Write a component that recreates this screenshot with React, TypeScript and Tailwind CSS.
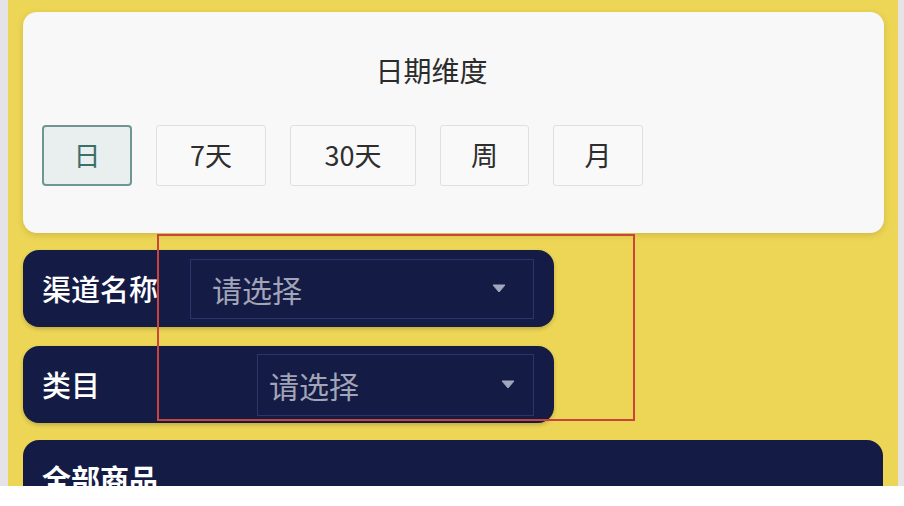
import React from "react";

const font = { fontFamily: '"Noto Sans CJK SC", "Noto Sans", sans-serif' };

function Arrow() {
  return (
    <svg width="14" height="9" viewBox="0 0 14 9" className="shrink-0">
      <path d="M1 1 L13 1 L7 8 Z" fill="#a3a7bb" stroke="#a3a7bb" strokeWidth="1" strokeLinejoin="round" />
    </svg>
  );
}

export default function App() {
  const btns = [
    { t: "日", w: "w-[90px]", active: true },
    { t: "7天", w: "w-[110px]" },
    { t: "30天", w: "w-[126px]" },
    { t: "周", w: "w-[89px]" },
    { t: "月", w: "w-[90px]" },
  ];
  return (
    <div className="w-[904px] h-[506px] flex flex-col bg-white overflow-hidden" style={font}>
      <div className="h-[486px] flex shrink-0">
        <div className="w-[8px] bg-[#e5e3e7] shrink-0" />
        <div className="relative flex-1 bg-[#edd655] overflow-hidden pl-[15px] pr-[14px] pt-[12px]">
          <div className="w-[861px] h-[221px] bg-[#f8f8f8] rounded-[14px] shadow-[0_2px_6px_rgba(120,100,20,0.25)] flex flex-col px-[19px] pt-[38px]">
            <div className="text-center text-[28px] leading-[40px] text-[#2b2b2b] pr-[44px]">日期维度</div>
            <div className="flex mt-[35px] gap-[24px]">
              {btns.map((b) => (
                <div
                  key={b.t}
                  className={
                    b.active
                      ? `${b.w} h-[61px] flex items-center justify-center rounded-[4px] border-2 border-[#6f9693] bg-[#e9efef] text-[#3c6e6a] text-[27px]`
                      : `${b.w} h-[61px] flex items-center justify-center rounded-[3px] border border-[#e0e0e0] bg-[#f9f9f9] text-[#2e2e2e] text-[27px]`
                  }
                >
                  {b.t}
                </div>
              ))}
            </div>
          </div>

          <div className="mt-[17px] w-[531px] h-[77px] rounded-[16px] bg-[#141b45] flex items-center pl-[19px] pr-[20px] shadow-[0_2px_4px_rgba(0,0,0,0.2)]">
            <div className="text-white text-[29px] font-medium w-[148px] shrink-0 leading-none">渠道名称</div>
            <div className="flex-1 h-[60px] border border-[#2c3468] flex items-center pl-[21px] pr-[27px] justify-between">
              <span className="text-[#a2a5b7] text-[30px] leading-none">请选择</span>
              <Arrow />
            </div>
          </div>

          <div className="mt-[19px] w-[531px] h-[77px] rounded-[16px] bg-[#141b45] flex items-center pl-[19px] pr-[20px] shadow-[0_2px_4px_rgba(0,0,0,0.2)]">
            <div className="text-white text-[29px] font-medium w-[215px] shrink-0 leading-none">类目</div>
            <div className="flex-1 h-[62px] border border-[#2c3468] flex items-center pl-[11px] pr-[18px] justify-between">
              <span className="text-[#a2a5b7] text-[30px] leading-none">请选择</span>
              <Arrow />
            </div>
          </div>

          <div className="mt-[17px] w-[860px] h-[120px] rounded-[16px] bg-[#141b45] pl-[19px] pt-[24px]">
            <div className="text-white text-[29px] font-bold leading-none">全部商品</div>
          </div>

          <div className="absolute left-[149px] top-[234px] w-[478px] h-[187px] border-2 border-[#c9443a]" />
        </div>
        <div className="w-[6px] bg-[#e5e3e7] shrink-0" />
      </div>
      <div className="flex-1 bg-white" />
    </div>
  );
}
